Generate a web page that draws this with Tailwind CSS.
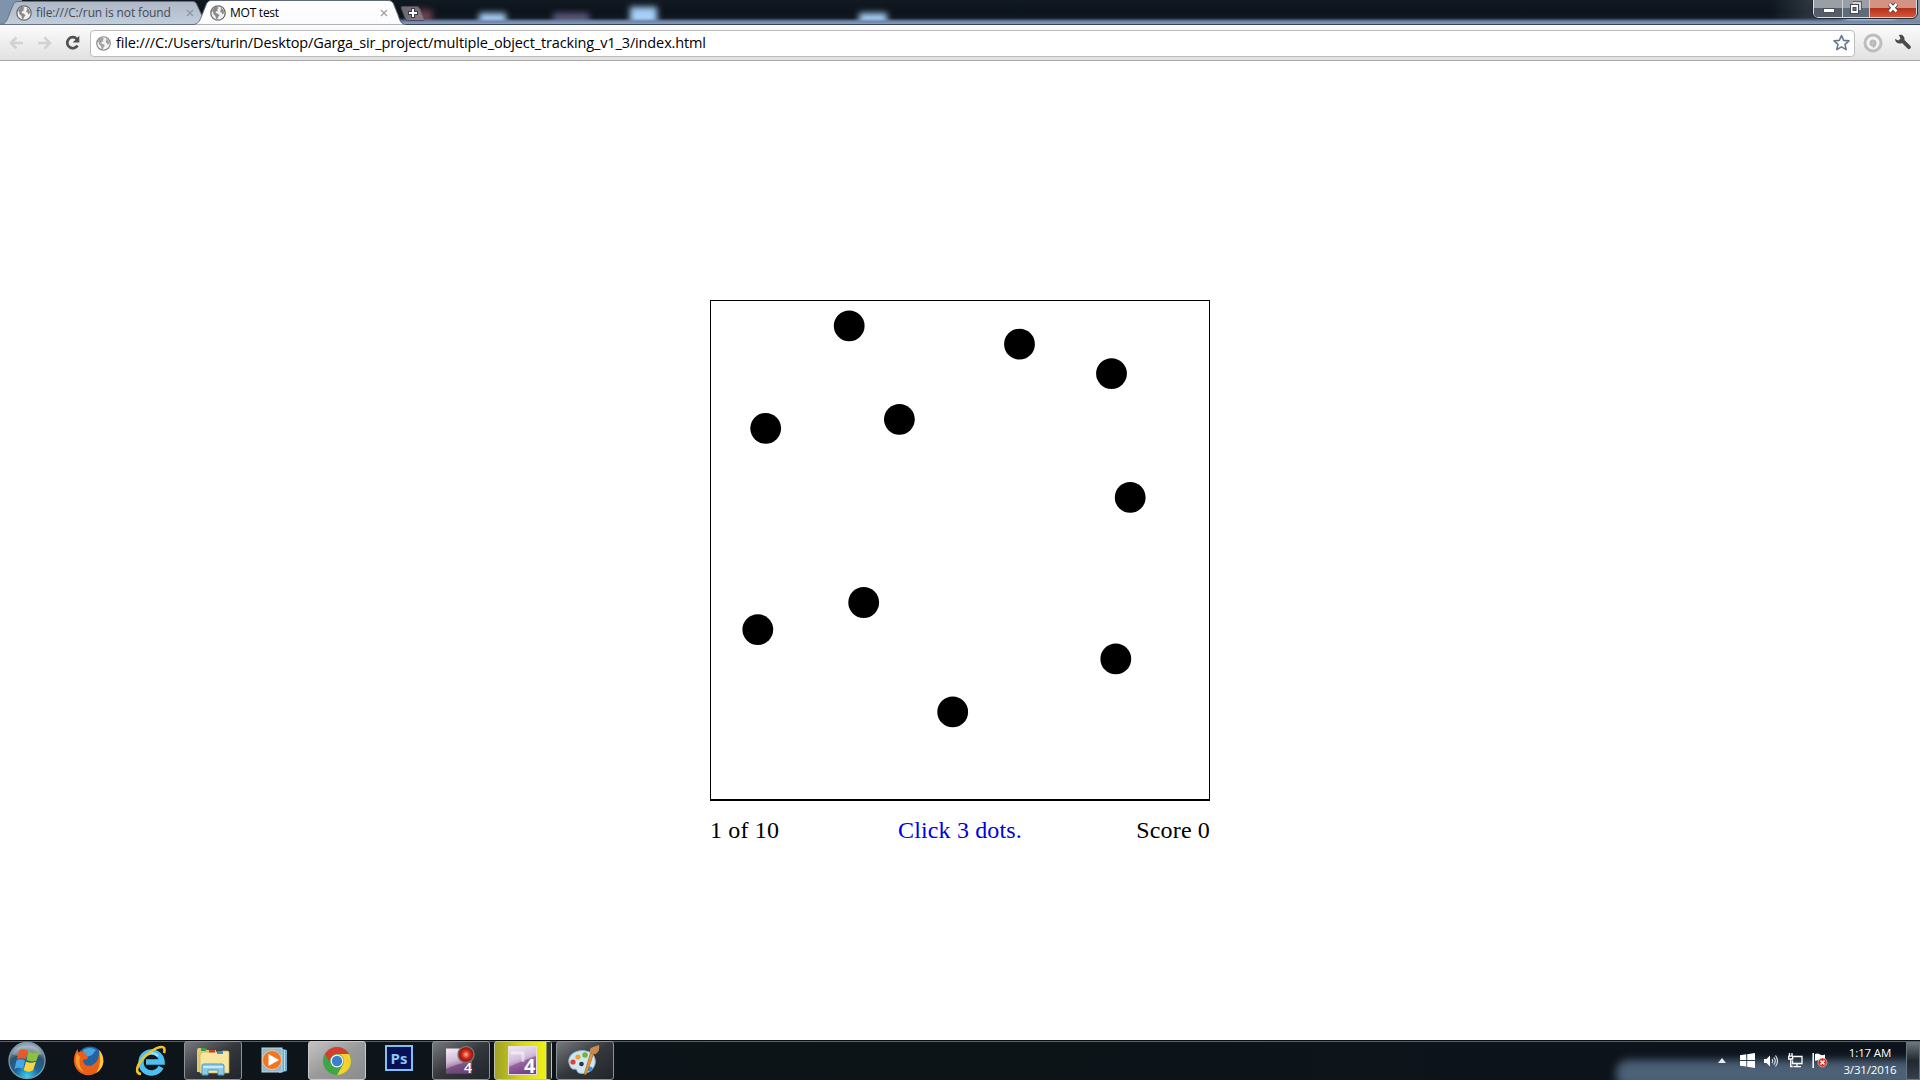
<!DOCTYPE html>
<html lang="en">
<head>
<meta charset="utf-8">
<title>MOT test</title>
<script src="https://cdn.jsdelivr.net/npm/@tailwindcss/browser@4"></script>
</head>
<body class="w-[1920px] h-[1080px] overflow-hidden flex flex-col bg-white">

<svg class="hidden">
  <defs>
    <symbol id="globe" viewBox="0 0 16 16">
      <circle cx="8" cy="8" r="7.200" fill="#f1f1f1" stroke="#6c6c6c" stroke-width="1.300"/>
      <path d="M2 5.500C3 3.400 4.600 2 7 1.800L8.600 3 7.200 4.300 8 5.500 6 6.500 5.500 8 8 8.800 9.500 10.500 8 12 7.300 14.300 5.800 13.500 5.500 11 3.500 9.300 3 7zM10.500 2.500L13.500 5 14 8 12.500 9.500 11.500 7.500 10 6.500 11 4.500z" fill="#8a8a8a"/>
    </symbol>
  </defs>
</svg>

<!-- Title bar with tabs -->
<header class="relative h-[25px] shrink-0 flex items-start bg-linear-to-b from-[#111922] via-[#0c131b] to-[#18212e]">
  <svg class="absolute inset-0" width="1920" height="25">
    <defs>
      <filter id="soft" x="-50%" y="-100%" width="200%" height="300%"><feGaussianBlur stdDeviation="3"/></filter>
      <linearGradient id="gEdge" x1="0" y1="0" x2="0" y2="1"><stop offset="0" stop-color="#7b91b0" stop-opacity="0"/><stop offset=".6" stop-color="#6f86a6"/><stop offset="1" stop-color="#859bb9"/></linearGradient>
      <linearGradient id="gRight" x1="0" y1="0" x2="1" y2="0"><stop offset="0" stop-color="#77808a" stop-opacity="0"/><stop offset="1" stop-color="#8c959e"/></linearGradient>
      <linearGradient id="gTab" x1="0" y1="0" x2="0" y2="1"><stop offset="0" stop-color="#aeb8c6"/><stop offset="1" stop-color="#c3cedd"/></linearGradient>
      <linearGradient id="gTabOn" x1="0" y1="0" x2="0" y2="1"><stop offset="0" stop-color="#ffffff"/><stop offset="1" stop-color="#fbfbfb"/></linearGradient>
    </defs>
    <rect x="0" width="22" height="25" fill="#7f93ab"/>
    <g filter="url(#soft)">
      <rect x="410" y="10" width="22" height="12" fill="#8a4a5e" opacity=".8"/>
      <rect x="479" y="13" width="27" height="14" fill="#a5cdf5"/>
      <rect x="553" y="13" width="36" height="10" fill="#6f6690" opacity=".8"/>
      <rect x="630" y="7" width="27" height="18" fill="#a5d0fa"/>
      <rect x="859" y="13" width="28" height="14" fill="#a5cdf5"/>
    </g>
    <rect x="1770" width="150" height="25" fill="url(#gRight)"/>
    <rect x="1845" y="13" width="50" height="12" fill="#b7d4ee" filter="url(#soft)"/>
    <rect y="18" x="400" width="1520" height="6" fill="url(#gEdge)"/>
    <rect y="24" width="1920" height="1" fill="#33415a"/>
    <path d="M0 24.500C6 24 7 20 9 15L13 5C14 2.500 15 1.500 18 1.500H192C195 1.500 196 2.500 197 5L206 24.500z" fill="url(#gTab)" stroke="#66717f"/>
    <path d="M192 25C199 24 200 20 202 15L206 5C207 2 208.500 .5 212 .5H388C391.500 .5 393 2 394 5L398 15C400 21 401 24 406 25z" fill="url(#gTabOn)" stroke="#626b78"/>
    <path d="M403 6.500H416C418 6.500 419 7 420 9L424 18C425 20 424 20.500 422 20.500H409C407 20.500 406 20 405 18L401.500 9C401 7 401 6.500 403 6.500z" fill="#8d8593" fill-opacity=".75" stroke="#4d4b57"/>
    <path d="M413 8v10M408 13h10" stroke="#3d3c48" stroke-width="4"/>
    <path d="M413 9v8M409 13h8" stroke="#fff" stroke-width="2"/>
  </svg>
  <div class="relative w-[194px] h-[25px] pl-4 flex items-center font-['Open_Sans',sans-serif] text-[12px] text-[#434a53]">
    <svg width="16" height="16" class="shrink-0"><use href="#globe"/></svg>
    <span class="ml-1 w-[150px] whitespace-nowrap tracking-[-0.130px]">file:///C:/run is not found</span>
    <svg width="8" height="8" class="shrink-0" viewBox="0 0 8 8"><path d="M1 1l6 6M7 1l-6 6" stroke="#8e98a5" stroke-width="1.400"/></svg>
  </div>
  <div class="relative w-[208px] h-[25px] pl-4 flex items-center font-['Open_Sans',sans-serif] text-[12px] text-black">
    <svg width="16" height="16" class="shrink-0"><use href="#globe"/></svg>
    <span class="ml-1 w-[150px] whitespace-nowrap tracking-[-0.250px]">MOT test</span>
    <svg width="8" height="8" class="shrink-0" viewBox="0 0 8 8"><path d="M1 1l6 6M7 1l-6 6" stroke="#a3a3a3" stroke-width="1.400"/></svg>
  </div>
  <div class="relative ml-auto mr-[3px] w-[104px] h-[18px] flex rounded-b-[5px] border border-t-0 border-[#d6dee6] outline outline-[#232a34] overflow-hidden">
    <div class="w-[29px] pl-px flex justify-center border-r border-[#c9d0d7] bg-linear-to-b from-[#9a9fa6] from-50% to-[#555d68] to-50%">
      <svg width="12" height="18"><rect x=".5" y="8.500" width="11" height="4" fill="#fff" stroke="#4b515b"/></svg>
    </div>
    <div class="w-[27px] flex justify-center border-r border-[#c9d0d7] bg-linear-to-b from-[#9a9fa6] from-50% to-[#5f6b79] to-50%">
      <svg width="14" height="18"><path d="M4 3h7v7" fill="none" stroke="#454b55" stroke-width="3.500"/><path d="M4 3h7v7" fill="none" stroke="#fff" stroke-width="1.500"/><rect x="1.500" y="4.500" width="8" height="9" fill="#fff" stroke="#454b55"/><rect x="4" y="7.500" width="3" height="3" fill="#777" stroke="#454b55"/></svg>
    </div>
    <div class="flex-1 flex justify-center bg-linear-to-b from-[#d39384] from-45% via-[#b42d18] via-45% to-[#d2553a]">
      <svg width="14" height="18"><path d="M3.500 4l7 7.500M10.500 4l-7 7.500" stroke="#533a3e" stroke-width="4.500"/><path d="M3.500 4l7 7.500M10.500 4l-7 7.500" stroke="#fff" stroke-width="2.600"/></svg>
    </div>
  </div>
</header>

<!-- Toolbar -->
<nav class="h-9 shrink-0 flex items-center bg-linear-to-b from-[#fcfcfc] to-[#e1e1e1] border-b border-[#a9a9a9] pt-px">
  <svg class="ml-2 shrink-0" width="18" height="18" viewBox="0 0 18 18"><path d="M8.500 3.500L3 9l5.500 5.500M3 9h12" fill="none" stroke="#d2d2d2" stroke-width="2.600"/></svg>
  <svg class="ml-[10px] shrink-0" width="18" height="18" viewBox="0 0 18 18"><path d="M8.500 3.500L14 9l-5.500 5.500M14 9H2" fill="none" stroke="#d2d2d2" stroke-width="2.600"/></svg>
  <svg class="ml-[10px] shrink-0" width="18" height="18" viewBox="0 0 18 18"><path d="M12.800 5A5.500 5.500 0 1 0 13.500 11.500" fill="none" stroke="#505050" stroke-width="2.700"/><path d="M15.300 1.800v6.700H8.700z" fill="#505050"/></svg>
  <div class="ml-2 w-[1765px] h-[27px] shrink-0 flex items-center rounded border border-[#bcbcbc] bg-white pl-[5px] pr-1">
    <svg width="15" height="15" class="shrink-0 opacity-80"><use href="#globe"/></svg>
    <span class="ml-[5px] whitespace-nowrap font-['Open_Sans',sans-serif] text-[14.500px] tracking-[-0.130px] leading-5 text-black">file:///C:/Users/turin/Desktop/Garga_sir_project/multiple_object_tracking_v1_3/index.html</span>
    <svg class="ml-auto shrink-0" width="18" height="18" viewBox="0 0 18 18"><path d="M9.500 1.500l2.200 4.900 5.300.5-4 3.500 1.200 5.200-4.700-2.700-4.700 2.700L6 10.400 2 6.900l5.300-.5z" fill="#fff" stroke="#68788f" stroke-width="1.600" stroke-linejoin="round"/></svg>
  </div>
  <svg class="ml-2 shrink-0" width="20" height="20" viewBox="0 0 20 20"><circle cx="10" cy="10" r="8" fill="#f3f3f3" stroke="#bdbdbd" stroke-width="3"/><circle cx="10" cy="10" r="2.500" fill="#c4c4c4" stroke="#b9b9b9" stroke-width="2"/><path d="M12.300 10q0 3-2.300 4.500" fill="none" stroke="#b9b9b9" stroke-width="2"/></svg>
  <svg class="ml-[11px] shrink-0" width="18" height="18" viewBox="0 0 18 18"><path d="M1 5l3.500 1.500L6.500 4.500 5 1c3-.8 6 1.300 5.500 5l6 6c1.300 1.500-1 4.200-2.700 2.700L8 9C4.500 10.500 1 8.500 1 5z" fill="#4b4b4b"/></svg>
</nav>

<!-- Tracking test -->
<main class="flex-1 flex flex-col items-center pt-[239px]">
  <div class="relative w-[500px] h-[501px] border border-b-2 border-black">
    <svg class="absolute -left-px -top-px" width="500" height="500" fill="#000">
      <circle cx="139.200" cy="25.800" r="15.400"/>
      <circle cx="309.500" cy="44.200" r="15.400"/>
      <circle cx="401.500" cy="73.600" r="15.400"/>
      <circle cx="55.700" cy="128.300" r="15.400"/>
      <circle cx="189.400" cy="119.300" r="15.400"/>
      <circle cx="420.200" cy="197.400" r="15.400"/>
      <circle cx="153.700" cy="302.500" r="15.400"/>
      <circle cx="47.800" cy="329.600" r="15.400"/>
      <circle cx="242.700" cy="411.900" r="15.400"/>
      <circle cx="405.800" cy="358.900" r="15.400"/>
    </svg>
  </div>
  <div class="mt-[15px] w-[500px] grid grid-cols-3 font-['Liberation_Serif',serif] text-[24px] tracking-[0.150px] leading-[28px] text-black">
    <span>1 of 10</span>
    <span class="text-center text-[#0000dd]">Click 3 dots.</span>
    <span class="text-right">Score 0</span>
  </div>
</main>

<!-- Taskbar -->
<footer class="relative h-10 shrink-0 flex items-start border-t border-[#0b0f14] bg-linear-to-r from-[#0e141b] via-[#0d1418] to-[#0c131c] font-['Open_Sans',sans-serif]">
  <div class="absolute inset-x-0 top-0 h-px bg-[#59636e]"></div>
  <div class="absolute right-0 bottom-0 w-[320px] h-[38px] overflow-hidden"><div class="absolute left-4 top-[18px] w-[330px] h-7 rounded-xl bg-[#4c6076] blur-[4px]"></div></div>

  <svg class="relative w-[60px] h-[39px] shrink-0" viewBox="0 0 60 39">
    <defs>
      <radialGradient id="orb" cx=".5" cy=".95" r=".85"><stop offset="0" stop-color="#3fd0f5"/><stop offset=".4" stop-color="#17699e"/><stop offset=".75" stop-color="#31536f"/><stop offset="1" stop-color="#8fa4b3"/></radialGradient>
    </defs>
    <circle cx="27" cy="19.500" r="18" fill="url(#orb)" stroke="#7b98ab" stroke-width="1.300"/>
    <path d="M12 13a16 13 0 0 1 30 0q-15 7-30 0z" fill="#fff" opacity=".25"/>
    <path d="M19 9.500q4-2.500 8.500 0l-2 9q-4.500-2.500-8.500 0z" fill="#e8592a"/>
    <path d="M28.500 10.500q5.500 2.500 11 0l-3 9q-5.500 2-10-.5z" fill="#8fc23c"/>
    <path d="M16.500 19.500q4-2.500 8.500 0l-2 8.500q-4.500-2.500-8.500 0z" fill="#47a7e6"/>
    <path d="M26 20.500q5 2.500 10 0L33 29.500q-5 2.500-9.300-.5z" fill="#fdd43c"/>
  </svg>

  <div class="relative flex gap-1 h-[39px]">
    <div class="w-[58px] flex items-center justify-center">
      <svg width="32" height="32" viewBox="0 0 32 32">
        <circle cx="17" cy="15" r="13.500" fill="#23639f"/><path d="M10 5q7-4 13 0l-4 5-8 3z" fill="#4aa5dc"/>
        <path d="M26 5c7 8 5 19-3 23-10 6-21-1-22-11C.5 12 2 8 4.500 4l1 3.500Q8 6 11 7l4 5-1 2-4 1c0 5 6 8 11 4 5-3 5-9 5-14z" fill="#e85f19"/>
        <path d="M26 5c7 8 5 19-3 23 4-5 5-14 3-23z" fill="#ffc937"/><path d="M4 8c-3 8-1 16 7 19-5-5-5-11-4-15z" fill="#f59a2b"/>
      </svg>
    </div>
    <div class="w-[58px] flex items-center justify-center">
      <svg width="32" height="32" viewBox="0 0 32 32">
        <path d="M26 22A10.500 10.500 0 1 1 27 17H11" fill="none" stroke="#4dbff0" stroke-width="5.500"/><path d="M23 11A9 9 0 0 0 9 12" fill="none" stroke="#a6e4fb" stroke-width="2"/>
        <path d="M6 29C-3 28 5 14 14 8 23 1 32-1 29 8" fill="none" stroke="#f2c42c" stroke-width="2.600"/>
      </svg>
    </div>
    <div class="w-[58px] flex items-center justify-center rounded-[3px] border border-[#8d9297] bg-linear-to-br from-[#777a7e] via-[#34383d] to-[#20252b]">
      <svg width="34" height="32" viewBox="0 0 34 32">
        <path d="M1 5q0-2 2-2h6l2 2h9v22H1z" fill="#e2ca75"/><rect x="5" y="3" width="5" height="3" fill="#30a24a"/>
        <path d="M7 7h18l2-1h5q1 0 1 2v20H4V9z" fill="#f6e6a0" stroke="#caa950" stroke-width=".7"/><rect x="13" y="5" width="6" height="2.500" fill="#c9402d"/><rect x="21" y="6.500" width="6" height="2.500" fill="#3b8fc4"/>
        <path d="M6 30V21q0-2 2-2h18q2 0 2 2v9h-6v-5H12v5z" fill="#8ccae6" stroke="#4c9bc4"/><path d="M7 22h20" stroke="#d9f3fc" stroke-width="1.500"/>
      </svg>
    </div>
    <div class="w-[58px] flex items-center justify-center pr-[2px]">
      <svg width="27" height="27" viewBox="0 0 27 27">
        <path d="M18 1l8 2v21l-8 2z" fill="#6aa8cb"/><path d="M20.500 3v21M23.500 3v21" stroke="#b9dff2"/><rect x="1" y="1" width="20" height="24" fill="#91bad1" stroke="#b9d8e9"/>
        <circle cx="11" cy="13" r="9.500" fill="#ef7622" stroke="#ffc18c"/><path d="M7.500 7v12L18 13z" fill="#fff"/>
      </svg>
    </div>
    <div class="w-[58px] flex items-center justify-center rounded-[3px] border border-[#c9c9c9] bg-linear-to-br from-[#c4c4c4] via-[#9a9a9a] to-[#8b8b8b]">
      <svg width="30" height="30" viewBox="0 0 30 30">
        <circle cx="15" cy="15" r="14" fill="#3fa648"/><path d="M2.900 8A14 14 0 0 1 27.100 8H15a7 7 0 0 0-6.100 10.500z" fill="#d93c2f"/><path d="M27.100 8A14 14 0 0 1 15 29l6.100-10.500A7 7 0 0 0 15 8z" fill="#f9d12f"/>
        <circle cx="15" cy="15" r="6.500" fill="#f5f5f5"/><circle cx="15" cy="15" r="5.200" fill="#3b7fd0"/>
      </svg>
    </div>
    <div class="w-[58px] pt-1 flex justify-center">
      <div class="w-7 h-[26px] border-2 border-[#84bff2] bg-[#071158] flex items-center justify-center text-[#8cc5f7] text-[15px] leading-none font-bold">Ps</div>
    </div>
    <div class="w-[58px] flex items-center justify-center rounded-[3px] border border-[#8d9297] bg-linear-to-br from-[#777a7e] via-[#34383d] to-[#20252b]">
      <div class="relative w-8 h-8">
        <svg class="absolute inset-0" width="32" height="32" viewBox="0 0 32 32">
          <defs><linearGradient id="mauve" x1="0" y1="0" x2=".3" y2="1"><stop offset="0" stop-color="#f4eaf6"/><stop offset=".5" stop-color="#d5bedb"/><stop offset="1" stop-color="#74427d"/></linearGradient>
          <radialGradient id="ruby"><stop offset="0" stop-color="#ffb08c"/><stop offset=".5" stop-color="#cf281c"/><stop offset="1" stop-color="#810e0a"/></radialGradient></defs>
          <rect x="1" y="3.500" width="26" height="25" fill="url(#mauve)"/><path d="M1 24q10-5 26-8v12.500H1z" fill="#70457a" opacity=".75"/>
          <circle cx="21" cy="9.500" r="8" fill="url(#ruby)" stroke="#77756e" stroke-width="1.500"/>
        </svg>
        <span class="absolute left-[19px] top-[15px] text-[14px] leading-4 font-semibold text-white">4</span>
      </div>
    </div>
    <div class="relative w-[58px] flex items-center justify-center rounded-[3px] border border-[#c4c5a8] bg-linear-to-r from-[#a0a024] via-[#d8db16] to-[#f3f51a]">
      <div class="absolute right-0 inset-y-0 w-[5px] bg-[#343a31] border-l border-[#8b8c62]"></div>
      <div class="relative w-8 h-8">
        <svg class="absolute inset-0" width="32" height="32" viewBox="0 0 32 32">
          <rect x="1.500" y="1.500" width="28" height="28" fill="url(#mauve)" stroke="#e6dfe6"/><path d="M2 22q12-6 27-11v18H2z" fill="#81458c" opacity=".6"/><path d="M4 8h12v9" fill="none" stroke="#fff" stroke-width="3" opacity=".5"/>
        </svg>
        <span class="absolute left-[17px] top-[10px] text-[20px] leading-[22px] font-bold text-white">4</span>
      </div>
    </div>
    <div class="w-[58px] flex items-center justify-center pr-1 rounded-[3px] border border-[#8d9297] bg-linear-to-br from-[#777a7e] via-[#34383d] to-[#20252b]">
      <svg width="34" height="32" viewBox="0 0 34 32">
        <path d="M3 18C1 9 12 4 20 6c8 1 10 8 9 13-2 7-9 11-16 9-3-1-1-4-4-4-3 1-5-2-6-6z" fill="#cfe7f3" stroke="#8fb8ce"/>
        <circle cx="7" cy="17" r="2.600" fill="#dd4234"/><circle cx="12" cy="12" r="2.600" fill="#f0a237"/><circle cx="19" cy="10" r="2.800" fill="#70b53e"/><circle cx="15.500" cy="19" r="2.300" fill="#2b3440"/><circle cx="24" cy="24" r="2.500" fill="#3e91d5"/>
        <path d="M27.500 9l-7 20q-3 2-2-1l6-20z" fill="#e79836" stroke="#9b5b1c" stroke-width=".6"/><path d="M24 7q-1-4 3-5l6-2q1 5-2 8-3 3-7-1z" fill="#c68a51"/>
      </svg>
    </div>
  </div>

  <div class="relative ml-auto flex h-[39px] items-center">
    <svg class="mr-[14px]" width="8" height="5"><path d="M0 5l4-5 4 5z" fill="#e9edf1"/></svg>
    <svg class="mr-[9px]" width="15" height="15" viewBox="0 0 15 15" fill="#fff"><path d="M0 2.200l6.300-.9v5.600H0zM7.200 1.200L15 0v6.900H7.200zM0 7.900h6.300v5.600L0 12.700zM7.200 7.900H15V15l-7.800-1.200z"/></svg>
    <svg class="mr-[10px]" width="14" height="14" viewBox="0 0 14 14"><path d="M0 5h2.500L6 1.500v11L2.500 9H0z" fill="#fff"/><path d="M8 5q1.500 2 0 4M9.800 3.300q3 3.700 0 7.400M11.500 1.500q4 5.500 0 11" fill="none" stroke="#dfe5ea" stroke-width="1.100"/></svg>
    <svg class="mr-[9px]" width="15" height="15" viewBox="0 0 15 15" fill="none" stroke="#fff" stroke-width="1.300"><path d="M5.500 3.500h8.500v7H4.500v-3M9 11v3M5.500 13.700h7.500M1.500 0v3M4 0v3M.7 3.200h4V6h-4zM2.700 6v7.500h2"/></svg>
    <svg class="mr-[15px]" width="16" height="15" viewBox="0 0 16 15"><path d="M1.200 0v15" stroke="#fff" stroke-width="1.500"/><path d="M3 1q3-1 5 .5t5 0V8q-3 1-5-.2T3 8z" fill="#fff"/><circle cx="10.500" cy="9.500" r="4.500" fill="#d52d24" stroke="#fff" stroke-width=".5"/><path d="M8.500 7.500l4 4m0-4l-4 4" stroke="#fff" stroke-width="1.500"/></svg>
    <div class="w-[54px] text-center text-[11.500px] leading-[17px] tracking-[-0.150px] text-white whitespace-nowrap">1:17 AM<br>3/31/2016</div>
    <div class="ml-[9px] w-[14px] h-[38px] border border-[#69737d] bg-linear-to-b from-[#6b737b] via-[#20282f] to-[#34414e]"></div>
  </div>
</footer>
</body>
</html>
